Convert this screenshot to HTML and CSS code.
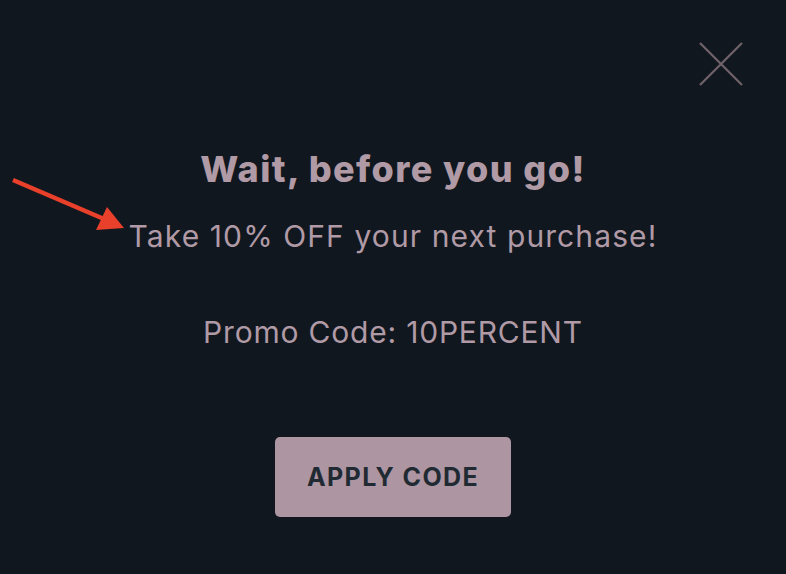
FILE: index.html
```html
<!DOCTYPE html>
<html lang="en">
<head>
<meta charset="utf-8">
<title>Wait, before you go!</title>
<link rel="stylesheet" href="styles.css">
</head>
<body>
<div class="popup">
  <button class="close" aria-label="Close">
    <svg width="46" height="46" viewBox="0 0 46 46"><path d="M2 2 L44 44 M44 2 L2 44" stroke="#6f6268" stroke-width="2.2" fill="none"/></svg>
  </button>
  <svg class="arrow" width="130" height="80" viewBox="0 0 130 80"><line x1="13" y1="20" x2="104" y2="59" stroke="#e8402a" stroke-width="4.5"/><polygon points="124,68 107,47 96,70" fill="#e8402a"/></svg>
  <div class="content">
    <h1 class="title">Wait, before you go!</h1>
    <p class="offer">Take 10% OFF your next purchase!</p>
    <p class="promo">Promo Code: 10PERCENT</p>
    <button class="apply">APPLY CODE</button>
  </div>
</div>
</body>
</html>
```
FILE: styles.css
```css
html, body {
  margin: 0;
  padding: 0;
  background: #11171e;
}
.popup {
  position: relative;
  width: 786px;
  height: 574px;
  font-family: Inter, "Noto Sans", sans-serif;
  color: #b09aa6;
}
.close {
  position: absolute;
  left: 698px;
  top: 41px;
  padding: 0;
  border: 0;
  background: none;
  line-height: 0;
}
.arrow {
  position: absolute;
  left: 0;
  top: 160px;
  overflow: visible;
}
.content {
  display: flex;
  flex-direction: column;
  align-items: center;
  padding-top: 145px;
}
.title {
  margin: 0;
  font-size: 36px;
  font-weight: 800;
  line-height: 48px;
  letter-spacing: 1.4px;
}
.offer {
  margin: 23px 0 0;
  font-size: 30px;
  font-weight: 400;
  line-height: 40px;
  letter-spacing: 1.1px;
}
.promo {
  margin: 56px 0 0;
  font-size: 30px;
  font-weight: 400;
  line-height: 40px;
  letter-spacing: 0.8px;
}
.apply {
  margin-top: 85px;
  width: 236px;
  height: 80px;
  border: 0;
  border-radius: 5px;
  background: #ad96a2;
  color: #1f2a33;
  font-family: Inter, "Noto Sans", sans-serif;
  font-size: 25px;
  font-weight: 700;
  letter-spacing: 1.4px;
}
```
